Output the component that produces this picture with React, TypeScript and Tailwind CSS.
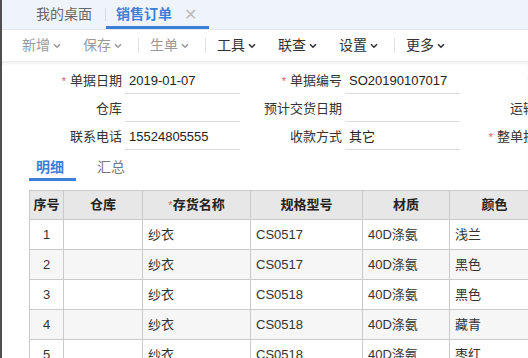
import React from "react";

const font = { fontFamily: '"Liberation Sans", "Noto Sans CJK SC", sans-serif' };

function Chevron({ dark }: { dark?: boolean }) {
  return (
    <svg width="8" height="6" viewBox="0 0 8 6" className="ml-[3px]">
      <path d="M1 1.2 L4 4.2 L7 1.2" fill="none" stroke={dark ? "#333" : "#9a9a9a"} strokeWidth="1.6" />
    </svg>
  );
}

function ToolItem({ label, dark }: { label: string; dark?: boolean }) {
  return (
    <div className={`flex items-center px-[11px] text-[14px] ${dark ? "text-[#333]" : "text-[#9a9a9a]"}`}>
      <span>{label}</span>
      <Chevron dark={dark} />
    </div>
  );
}

function Sep() {
  return <div className="ml-[5px] h-[15px] w-px bg-[#e0e0e0]" />;
}

function Field({ label, value, req }: { label: string; value?: string; req?: boolean }) {
  return (
    <div className="flex h-[28px] w-[220px] shrink-0 items-center">
      <div className="w-[80px] shrink-0 text-right text-[13px] text-[#333] whitespace-nowrap">
        {req && <span className="mr-[4px] text-[11px] text-[#e05a5a]">*</span>}
        {label}
      </div>
      <div className="ml-[3px] flex h-[26px] w-[115px] shrink-0 items-center border-b border-[#dcdcdc] pl-[4px] text-[13px] text-[#222]">
        {value}
      </div>
    </div>
  );
}

const cols = [34, 79, 108, 112, 87, 90];
const headers = ["序号", "仓库", "存货名称", "规格型号", "材质", "颜色"];
const rows = [
  ["1", "", "纱衣", "CS0517", "40D涤氨", "浅兰"],
  ["2", "", "纱衣", "CS0517", "40D涤氨", "黑色"],
  ["3", "", "纱衣", "CS0518", "40D涤氨", "黑色"],
  ["4", "", "纱衣", "CS0518", "40D涤氨", "藏青"],
  ["5", "", "纱衣", "CS0518", "40D涤氨", "枣红"],
];

export default function App() {
  return (
    <div className="flex h-[358px] w-[528px] overflow-hidden bg-white" style={font}>
      <div className="w-[2px] shrink-0 bg-[#4f4f4f]" />
      <div className="flex min-w-0 flex-1 flex-col">
        {/* tab bar */}
        <div className="flex h-[29px] shrink-0 items-stretch bg-[#eff3fa] text-[14px]">
          <div className="flex items-center pl-[34px] pr-[13px] text-[#666]">我的桌面</div>
          <div className="my-[8px] w-px bg-[#d6dbe3]" />
          <div className="flex items-center border-b-[3px] border-[#3c7fd8] pl-[10px] pr-[12px] pt-[3px]">
            <span className="font-bold text-[#3c7fd8]">销售订单</span>
            <span className="ml-[12px] text-[16px] text-[#bbb]">✕</span>
          </div>
        </div>
        {/* toolbar */}
        <div className="flex h-[32px] shrink-0 items-center border-t border-[#e4e8ee] pl-[9px]">
          <ToolItem label="新增" />
          <ToolItem label="保存" />
          <Sep />
          <ToolItem label="生单" />
          <Sep />
          <ToolItem label="工具" dark />
          <ToolItem label="联查" dark />
          <ToolItem label="设置" dark />
          <Sep />
          <ToolItem label="更多" dark />
        </div>
        {/* body */}
        <div className="flex flex-1 flex-col shadow-[inset_0_3px_3px_-1px_rgba(0,0,0,0.09)]">
          <div className="flex flex-col pl-[40px] pt-[6px]">
            <div className="flex">
              <Field label="单据日期" value="2019-01-07" req />
              <Field label="单据编号" value="SO20190107017" req />
              <Field label="客户" req />
            </div>
            <div className="flex">
              <Field label="仓库" />
              <Field label="预计交货日期" />
              <Field label="运输方式" />
            </div>
            <div className="flex">
              <Field label="联系电话" value="15524805555" />
              <Field label="收款方式" value="其它" />
              <Field label="整单折扣率" req />
            </div>
          </div>
          {/* sub tabs */}
          <div className="ml-[27px] mt-[6px] flex text-[14px] leading-[20px]">
            <div className="w-[47px] border-b-[3px] border-[#3c7fd8] pb-[1px] pl-[7px] font-bold text-[#3c7fd8]">明细</div>
            <div className="ml-[14px] pl-[7px] text-[#777]">汇总</div>
          </div>
          {/* table */}
          <div className="ml-[27px] mt-[9px]">
            <table className="border-collapse text-[13px]" style={{ tableLayout: "fixed", width: cols.reduce((a, b) => a + b, 0) }}>
              <colgroup>
                {cols.map((w, i) => (
                  <col key={i} style={{ width: w }} />
                ))}
              </colgroup>
              <thead>
                <tr className="h-[29px] bg-[#e7e7e7]">
                  {headers.map((h, i) => (
                    <th key={i} className="border border-[#cacaca] p-0 text-center font-bold text-[#222]">
                      {i === 2 && <span className="text-[11px] font-normal text-[#e05a5a]">*</span>}
                      {h}
                    </th>
                  ))}
                </tr>
              </thead>
              <tbody>
                {rows.map((r, ri) => (
                  <tr key={ri} className={`h-[30px] ${ri % 2 === 1 ? "bg-[#f6f6f6]" : "bg-white"}`}>
                    {r.map((c, ci) => (
                      <td
                        key={ci}
                        className={`border border-[#cacaca] p-0 text-[#333] ${ci === 0 ? "text-center" : "pl-[5px] text-left"}`}
                      >
                        {c}
                      </td>
                    ))}
                  </tr>
                ))}
              </tbody>
            </table>
          </div>
        </div>
      </div>
    </div>
  );
}
